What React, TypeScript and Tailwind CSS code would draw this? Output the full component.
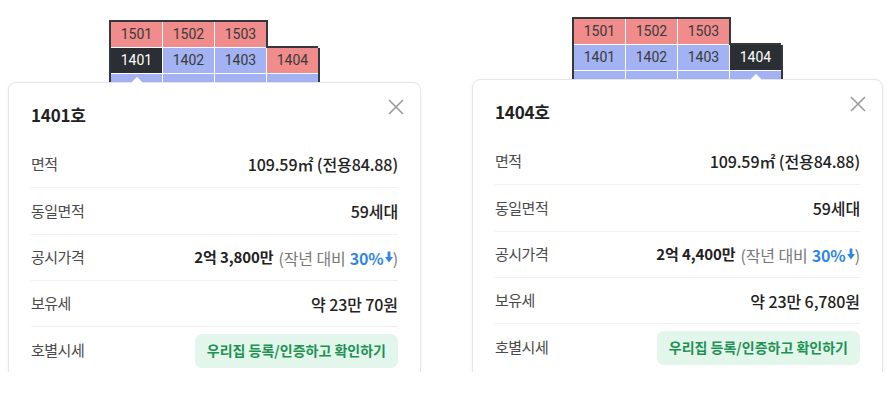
import React from "react";

const FONT = { fontFamily: '"Noto Sans CJK KR", "Noto Sans", Roboto, sans-serif' };

type CellKind = "pink" | "blue" | "dark";

function Cell({ label, kind, extra = "" }: { label: string; kind: CellKind; extra?: string }) {
  const bg =
    kind === "pink" ? "bg-[#f08c8c] text-[#3a3a3a]" : kind === "blue" ? "bg-[#a3b2f2] text-[#3a3a3a]" : "bg-[#2b2e33] text-white";
  return (
    <div
      className={`h-[26px] w-[52px] flex items-center justify-center text-[14px] box-border border-b border-r border-white ${bg} ${extra}`}
      style={{ fontFamily: 'Roboto, "Noto Sans", sans-serif' }}
    >
      {label}
    </div>
  );
}

function Grid({ selected }: { selected: "1401" | "1404" }) {
  return (
    <div className="flex flex-col">
      <div className="flex w-fit border-t-2 border-l-2 border-r-2 border-[#34373b]">
        <Cell label="1501" kind="pink" />
        <Cell label="1502" kind="pink" />
        <Cell label="1503" kind="pink" extra="!w-[51px] !border-r-0" />
      </div>
      <div className="flex w-fit items-start border-l-2 border-r-2 border-[#34373b]">
        <Cell label="1401" kind={selected === "1401" ? "dark" : "blue"} />
        <Cell label="1402" kind="blue" />
        <Cell label="1403" kind="blue" />
        <Cell
          label="1404"
          kind={selected === "1404" ? "dark" : "pink"}
          extra="!w-[51px] !border-r-0 !h-[28px] -mt-[2px] !border-t-2 !border-t-[#34373b]"
        />
      </div>
      <div className="flex w-fit h-[8px] overflow-hidden border-l-2 border-r-2 border-[#34373b]">
        <Cell label="" kind="blue" />
        <Cell label="" kind="blue" />
        <Cell label="" kind="blue" />
        <Cell label="" kind="blue" extra="!w-[51px] !border-r-0" />
      </div>
    </div>
  );
}

function DownArrow() {
  return (
    <svg width="8" height="12" viewBox="0 0 8 12" className="inline-block ml-[1px] -mt-[1px]">
      <rect x="2.6" y="0.5" width="2.8" height="6.5" fill="#2f86e8" />
      <path d="M0 6 L8 6 L4 11.5 Z" fill="#2f86e8" />
    </svg>
  );
}

function Row({
  label,
  children,
  last = false,
  h = "h-[47px]",
}: {
  label: string;
  children: React.ReactNode;
  last?: boolean;
  h?: string;
}) {
  return (
    <div className={`flex items-center justify-between ${h} box-border ${last ? "" : "border-b border-[#f0f0f0]"}`}>
      <span className="text-[15px] text-[#4a4a4a] tracking-[-0.5px]">{label}</span>
      <div className="text-[16px] text-[#222] tracking-[-0.1px] flex items-center">{children}</div>
    </div>
  );
}

function Card({
  title,
  price,
  tax,
  pointerLeft,
  width,
}: {
  title: string;
  price: string;
  tax: string;
  pointerLeft: string;
  width: string;
}) {
  return (
    <div
      className={`relative ${width} bg-white rounded-[8px] border border-[#e6e6e6] shadow-[0_1px_4px_rgba(0,0,0,0.06)] px-[22px] pt-[20px] pb-[20px]`}
    >
      <svg width="14" height="8" viewBox="0 0 14 8" className={`absolute -top-[7px] ${pointerLeft}`}>
        <path d="M0 8 L7 1 L14 8 Z" fill="white" />
        <path d="M0.5 7.5 L7 1 L13.5 7.5" fill="none" stroke="#e6e6e6" strokeWidth="1" />
      </svg>
      <svg width="16" height="16" viewBox="0 0 16 16" className="absolute top-[16px] right-[16px]">
        <path d="M1 1 L15 15 M15 1 L1 15" stroke="#9a9a9a" strokeWidth="1.6" />
      </svg>
      <div className="h-[24px] flex items-center text-[17px] font-bold text-[#222] tracking-[-0.2px]">{title}</div>
      <div className="mt-[14px] flex flex-col">
        <Row label="면적">
          <span className="font-medium">109.59㎡ (전용84.88)</span>
        </Row>
        <Row label="동일면적">
          <span className="font-medium">59세대</span>
        </Row>
        <Row label="공시가격" h="h-[46px]">
          <span className="font-bold text-[15px]">{price}</span>
          <span className="text-[#777] ml-[5px]">(작년 대비 </span>
          <span className="text-[#2f86e8] font-semibold ml-[4px]">30%</span>
          <DownArrow />
          <span className="text-[#777]">)</span>
        </Row>
        <Row label="보유세" h="h-[46px]">
          <span className="font-medium">{tax}</span>
        </Row>
        <Row label="호별시세" last>
          <button className="h-[34px] px-[12px] rounded-[7px] bg-[#e3f6eb] text-[#1d9253] text-[14px] font-bold tracking-[0px]">
            우리집 등록/인증하고 확인하기
          </button>
        </Row>
      </div>
    </div>
  );
}

export default function App() {
  return (
    <div className="w-[893px] h-[372px] overflow-hidden bg-white flex" style={FONT}>
      <div className="w-[464px] pt-[20px] pl-[8px] flex flex-col">
        <div className="ml-[101px]">
          <Grid selected="1401" />
        </div>
        <Card title="1401호" price="2억 3,800만" tax="약 23만 70원" pointerLeft="left-[121px]" width="w-[413px]" />
      </div>
      <div className="w-[429px] pt-[17px] pl-[8px] flex flex-col">
        <div className="ml-[100px]">
          <Grid selected="1404" />
        </div>
        <Card title="1404호" price="2억 4,400만" tax="약 23만 6,780원" pointerLeft="left-[276px]" width="w-[411px]" />
      </div>
    </div>
  );
}
